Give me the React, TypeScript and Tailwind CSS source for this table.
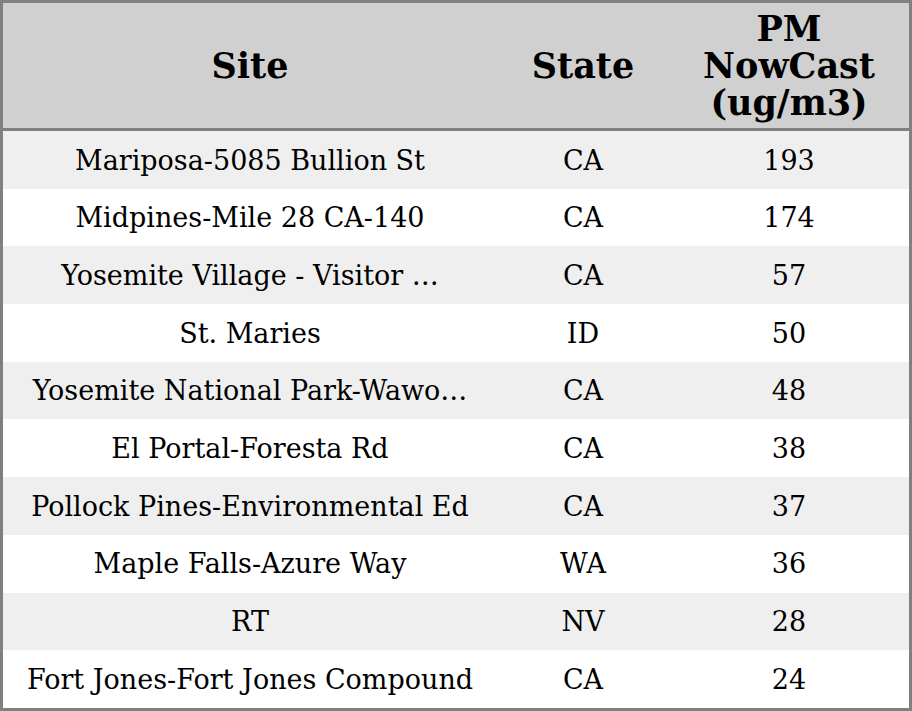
const rows: [string, string, number][] = [
  ["Mariposa-5085 Bullion St", "CA", 193],
  ["Midpines-Mile 28 CA-140", "CA", 174],
  ["Yosemite Village - Visitor …", "CA", 57],
  ["St. Maries", "ID", 50],
  ["Yosemite National Park-Wawo…", "CA", 48],
  ["El Portal-Foresta Rd", "CA", 38],
  ["Pollock Pines-Environmental Ed", "CA", 37],
  ["Maple Falls-Azure Way", "WA", 36],
  ["RT", "NV", 28],
  ["Fort Jones-Fort Jones Compound", "CA", 24],
];

export default function App() {
  return (
    <div className="w-[912px] font-['DejaVu_Serif',serif] text-black">
      <div className="border-[3px] border-[#808080] bg-white">
        <div className="grid grid-cols-[494px_172px_1fr] h-[128px] bg-[#d0d0d0] border-b-[3px] border-[#808080] items-center text-center text-[35px] font-bold leading-[37.3px]">
          <div>Site</div>
          <div>State</div>
          <div>
            PM
            <br />
            NowCast
            <br />
            (ug/m3)
          </div>
        </div>
        {rows.map(([site, state, pm], i) => (
          <div
            key={site}
            className={`grid grid-cols-[494px_172px_1fr] h-[57.7px] pt-[2px] items-center text-center text-[27px] ${
              i % 2 === 0 ? "bg-[#efefef]" : "bg-white"
            }`}
          >
            <div>{site}</div>
            <div>{state}</div>
            <div>{pm}</div>
          </div>
        ))}
      </div>
    </div>
  );
}
